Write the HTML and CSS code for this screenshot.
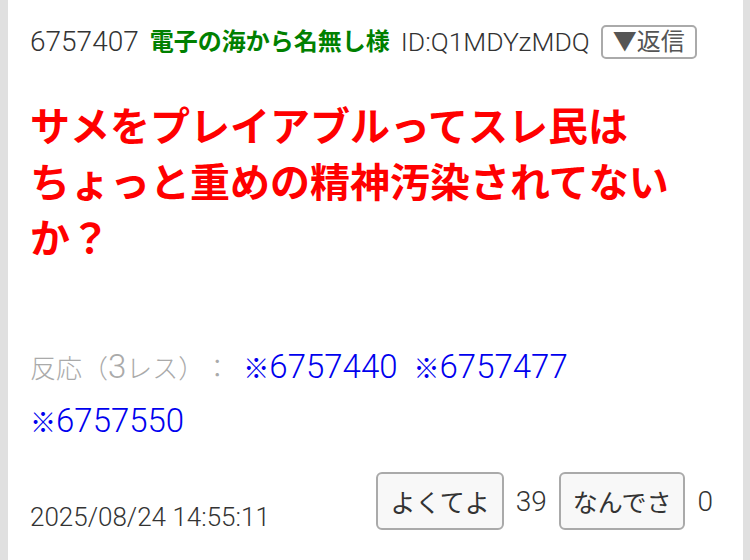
FILE: index.html
```html
<!DOCTYPE html>
<html lang="ja">
<head>
    <meta charset="UTF-8">
    <meta name="viewport" content="width=device-width, initial-scale=1.0">
    <title>6757407</title>
    <link rel="stylesheet" href="styles.css">
</head>
<body>
    <div class="post">
        <div class="post-head">
            <span class="post-no">6757407</span>
            <span class="post-name">電子の海から名無し様</span>
            <span class="post-id">ID:Q1MDYzMDQ</span>
            <button class="reply-btn">▼返信</button>
        </div>

        <div class="post-body">サメをプレイアブルってスレ民は<br>ちょっと重めの精神汚染されてないか？</div>

        <div class="post-res">
            <span class="res-label"><span class="ja">反応（</span>3<span class="ja">レス）：</span></span><a href="#"><span class="ja">※</span>6757440</a> <a href="#"><span class="ja">※</span>6757477</a> <a href="#"><span class="ja">※</span>6757550</a>
        </div>

        <div class="post-foot">
            <span class="post-date">2025/08/24 14:55:11</span>
            <div class="votes">
                <button class="vote-btn">よくてよ</button>
                <span class="vote-count">39</span>
                <button class="vote-btn">なんでさ</button>
                <span class="vote-count">0</span>
            </div>
        </div>
    </div>
</body>
</html>
```

FILE: styles.css
```css
body {
    margin: 0;
    background-color: #e0e0e0;
    font-family: Roboto, "Noto Sans CJK JP", sans-serif;
    color: #333;
    text-spacing-trim: space-all;
}
.post {
    background-color: #fff;
    margin: 0 7px 0 8px;
    padding: 25px 22px 0;
    height: 560px;
    box-sizing: border-box;
}
/* japanese glyphs run smaller than the latin ones */
.ja {
    font-size: 26px;
}
.post-head {
    display: flex;
    align-items: center;
    gap: 11px;
    font-size: 28px;
    line-height: 34px;
    font-weight: 300;
}
.post-name {
    color: #008000;
    font-weight: bold;
    font-size: 24px;
}
.post-id {
    font-size: 26.5px;
}
.reply-btn {
    font-family: inherit;
    font-size: 24px;
    color: #555;
    background-color: #fff;
    border: 2px solid #aaa;
    border-radius: 5px;
    height: 34px;
    padding: 0 10px;
    line-height: 28px;
}
.post-body {
    margin-top: 41px;
    font-size: 40px;
    line-height: 56px;
    font-weight: bold;
    color: #f00;
}
.post-res {
    margin-top: 73px;
    font-size: 33px;
    line-height: 52px;
    font-weight: 300;
}
.res-label {
    color: #aaa;
    margin-right: 13px;
}
.post-res a {
    color: #0000ee;
    text-decoration: none;
    margin-right: 8px;
}
.post-foot {
    display: flex;
    justify-content: space-between;
    align-items: flex-end;
    margin-top: 23px;
}
.post-date {
    font-size: 26px;
    font-weight: 300;
    line-height: 26px;
}
.votes {
    display: flex;
    align-items: center;
    gap: 12px;
    padding-right: 8px;
    font-size: 28px;
    font-weight: 300;
}
.vote-btn {
    font-family: inherit;
    font-size: 25px;
    color: #333;
    background-color: #f8f8f8;
    border: 2px solid #aaa;
    border-radius: 6px;
    height: 58px;
    padding: 0 12px;
}
```
